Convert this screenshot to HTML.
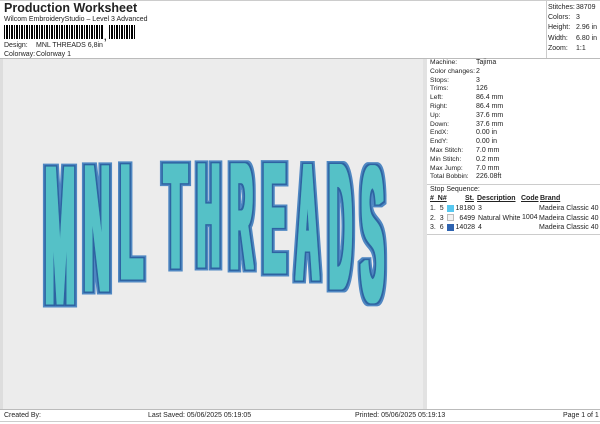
<!DOCTYPE html><html><head><style>
*{margin:0;padding:0;box-sizing:border-box}
body{width:600px;height:424px;background:#fff;font-family:"Liberation Sans",sans-serif;color:#222;position:relative;overflow:hidden;font-size:7px}
.a{position:absolute;white-space:nowrap}
</style></head><body>
<div class="a" style="left:4px;top:1px;font-size:12.5px;font-weight:bold">Production Worksheet</div>
<div class="a" style="left:4px;top:16px;font-size:7px">Wilcom EmbroideryStudio – Level 3 Advanced</div>
<div class="a" style="left:4px;top:25px;height:14px;width:132px;background:repeating-linear-gradient(90deg,#000 0 1px,#fff 1px 2px,#000 2px 4px,#fff 4px 5px)"></div>
<div class="a" style="left:103px;top:25px;width:6px;height:14px;background:#fff"></div>
<div class="a" style="left:104px;top:32px;font-weight:bold;font-size:9px">,</div>
<div class="a" style="left:4px;top:42px">Design:</div><div class="a" style="left:36px;top:42px">MNL THREADS 6,8in</div>
<div class="a" style="left:4px;top:51px">Colorway:</div><div class="a" style="left:36px;top:51px">Colorway 1</div>
<div class="a" style="left:0;top:0;width:600px;height:1px;background:#ccc"></div>
<div class="a" style="left:546px;top:0;width:1px;height:58px;background:#ccc"></div>
<div class="a" style="left:548px;top:3px;line-height:10.2px">Stitches:<br>Colors:<br>Height:<br>Width:<br>Zoom:</div>
<div class="a" style="left:576px;top:3px;line-height:10.2px">38709<br>3<br>2.96 in<br>6.80 in<br>1:1</div>
<div class="a" style="left:0;top:58px;width:600px;height:1px;background:#bbb"></div>
<div class="a" style="left:0;top:59px;width:427px;height:350px;background:#ececec;border-left:3px solid #ddd"></div>
<div class="a" style="left:423px;top:59px;width:4px;height:350px;background:#e2e2e2"></div>
<div class="a" style="left:430px;top:59px;line-height:8.8px;font-size:6.7px">Machine:<br>Color changes:<br>Stops:<br>Trims:<br>Left:<br>Right:<br>Up:<br>Down:<br>EndX:<br>EndY:<br>Max Stitch:<br>Min Stitch:<br>Max Jump:<br>Total Bobbin:</div>
<div class="a" style="left:476px;top:59px;line-height:8.8px">Tajima<br>2<br>3<br>126<br>86.4 mm<br>86.4 mm<br>37.6 mm<br>37.6 mm<br>0.00 in<br>0.00 in<br>7.0 mm<br>0.2 mm<br>7.0 mm<br>226.08ft</div>
<div class="a" style="left:427px;top:184px;width:173px;height:1px;background:#ccc"></div>
<div class="a" style="left:430px;top:186px">Stop Sequence:</div>
<div class="a" style="left:430px;top:195px;font-weight:bold;text-decoration:underline">#&nbsp; N#</div>
<div class="a" style="left:465px;top:195px;font-weight:bold;text-decoration:underline">St.</div>
<div class="a" style="left:477px;top:195px;font-weight:bold;text-decoration:underline">Description</div>
<div class="a" style="left:521px;top:195px;font-weight:bold;text-decoration:underline">Code</div>
<div class="a" style="left:540px;top:195px;font-weight:bold;text-decoration:underline">Brand</div>
<div class="a" style="left:430px;top:204px;line-height:9.6px">1.&nbsp; 5<br>2.&nbsp; 3<br>3.&nbsp; 6</div>
<div class="a" style="left:447px;top:205px;width:7px;height:7px;background:#57c8f0"></div>
<div class="a" style="left:447px;top:214px;width:7px;height:7px;background:#f2f2f2;border:1px solid #bbb"></div>
<div class="a" style="left:447px;top:224px;width:7px;height:7px;background:#2e63b0"></div>
<div class="a" style="left:455px;top:204px;line-height:9.6px;text-align:right;width:20px">18180<br>6499<br>14028</div>
<div class="a" style="left:478px;top:204px;line-height:9.6px">3<br>Natural White<br>4</div>
<div class="a" style="left:522px;top:213.6px">1004</div>
<div class="a" style="left:539px;top:204px;line-height:9.6px">Madeira Classic 40<br>Madeira Classic 40<br>Madeira Classic 40</div>
<div class="a" style="left:427px;top:234px;width:173px;height:1px;background:#ccc"></div>
<div class="a" style="left:0;top:409px;width:600px;height:1px;background:#bbb"></div>
<div class="a" style="left:0;top:421px;width:600px;height:1px;background:#ccc"></div>
<div class="a" style="left:4px;top:412px">Created By:</div>
<div class="a" style="left:148px;top:412px">Last Saved: 05/06/2025 05:19:05</div>
<div class="a" style="left:355px;top:412px">Printed: 05/06/2025 05:19:13</div>
<div class="a" style="left:563px;top:412px">Page 1 of 1</div>
<svg class="a" style="left:0;top:0" width="600" height="424" font-family="Liberation Sans, sans-serif" font-weight="bold">
<defs>
<filter id="f" x="0" y="0" width="600" height="424" filterUnits="userSpaceOnUse">
<feMorphology in="SourceAlpha" operator="dilate" radius="4.5" result="o"/>
<feMorphology in="SourceAlpha" operator="dilate" radius="3" result="m"/>
<feMorphology in="SourceAlpha" operator="dilate" radius="1.6" result="c"/>
<feFlood flood-color="#5087c2"/><feComposite in2="o" operator="in" result="A"/>
<feFlood flood-color="#2f64a2"/><feComposite in2="m" operator="in" result="B"/>
<feFlood flood-color="#55c1c7"/><feComposite in2="c" operator="in" result="C"/>
<feMerge><feMergeNode in="A"/><feMergeNode in="B"/><feMergeNode in="C"/></feMerge>
</filter>
</defs>
<g filter="url(#f)" fill="#000">
<text x="45" y="303" font-size="196" textLength="30" lengthAdjust="spacingAndGlyphs">M</text>
<text x="84" y="290" font-size="179" textLength="26" lengthAdjust="spacingAndGlyphs">N</text>
<text x="120" y="278" font-size="163" textLength="23" lengthAdjust="spacingAndGlyphs">L</text>
<text x="164" y="267" font-size="148" textLength="23" lengthAdjust="spacingAndGlyphs">T</text>
<text x="197" y="266" font-size="147" textLength="23" lengthAdjust="spacingAndGlyphs">H</text>
<text x="230" y="268" font-size="150" textLength="23" lengthAdjust="spacingAndGlyphs">R</text>
<text x="263" y="272" font-size="156" textLength="23" lengthAdjust="spacingAndGlyphs">E</text>
<text x="296" y="279" font-size="165" textLength="23" lengthAdjust="spacingAndGlyphs">A</text>
<text x="329" y="288" font-size="178" textLength="23" lengthAdjust="spacingAndGlyphs">D</text>
<text x="361" y="300" font-size="191" textLength="23" lengthAdjust="spacingAndGlyphs">S</text>
</g>
</svg>
</body></html>
